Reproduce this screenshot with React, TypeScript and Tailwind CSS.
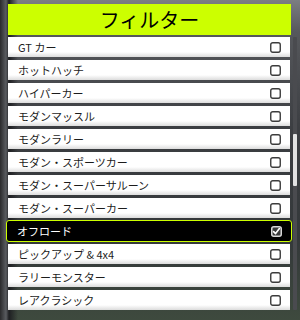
import React from "react";

const items = [
  "GT カー",
  "ホットハッチ",
  "ハイパーカー",
  "モダンマッスル",
  "モダンラリー",
  "モダン・スポーツカー",
  "モダン・スーパーサルーン",
  "モダン・スーパーカー",
  "オフロード",
  "ピックアップ & 4x4",
  "ラリーモンスター",
  "レアクラシック",
];

function Box({ checked }: { checked?: boolean }) {
  if (checked) {
    return (
      <svg width="11" height="11" viewBox="0 0 11 11">
        <rect x="0.75" y="0.75" width="9.5" height="9.5" rx="2" fill="#3a3a3a" stroke="#d8d8d8" strokeWidth="1.5" />
        <path d="M2.6 5.6 L4.6 7.6 L8.4 2.6" fill="none" stroke="#ffffff" strokeWidth="1.6" strokeLinecap="round" strokeLinejoin="round" />
      </svg>
    );
  }
  return (
    <svg width="11" height="11" viewBox="0 0 11 11">
      <rect x="0.75" y="0.75" width="9.5" height="9.5" rx="2" fill="#ffffff" stroke="#3c3c3c" strokeWidth="1.4" />
    </svg>
  );
}

export default function App() {
  return (
    <div
      className="relative w-[300px] h-[320px] overflow-hidden bg-[linear-gradient(180deg,#7c7e82_0%,#56585c_10%,#3c3e42_40%,#34383a_75%,#3e4a3e_100%)]"
      style={{ fontFamily: '"Noto Sans CJK JP", "Noto Sans", sans-serif' }}
    >
      <div className="absolute inset-0 bg-[linear-gradient(90deg,#2a2a2c_0%,#5a5c60_2%,#1e1f22_3%,transparent_6%)]" />
      <div className="relative pt-[4px] pl-[8px]">
        <div className="w-[283px] h-[31px] bg-[#ccff00] flex items-center justify-center text-[20px] leading-none text-black">
          フィルター
        </div>
        <div className="flex mt-[2px]">
          <div className="w-[282px] flex flex-col gap-[3px]">
            {items.map((t, i) =>
              t === "オフロード" ? (
                <div
                  key={t}
                  className="-mx-[2px] -my-[1px] h-[22px] bg-black border-[1.5px] border-[#ccff00] rounded-[3px] flex items-center justify-between pl-[10px] pr-[9px] text-white text-[11px]"
                >
                  <span>{t}</span>
                  <Box checked />
                </div>
              ) : (
                <div
                  key={t}
                  className="h-[20px] bg-[linear-gradient(180deg,#ffffff_0%,#ffffff_75%,#dcdcdc_100%)] flex items-center justify-between pl-[10px] pr-[9px] text-[#1c1c1c] text-[11px]"
                >
                  <span>{t}</span>
                  <Box />
                </div>
              )
            )}
          </div>
          <div className="ml-[3px] w-[4px] h-[273px] bg-[#4a4b4f] rounded-[1px] flex flex-col">
            <div className="h-[97px]" />
            <div className="h-[52px] bg-[#e2e2e2] rounded-[1px]" />
          </div>
        </div>
      </div>
    </div>
  );
}
